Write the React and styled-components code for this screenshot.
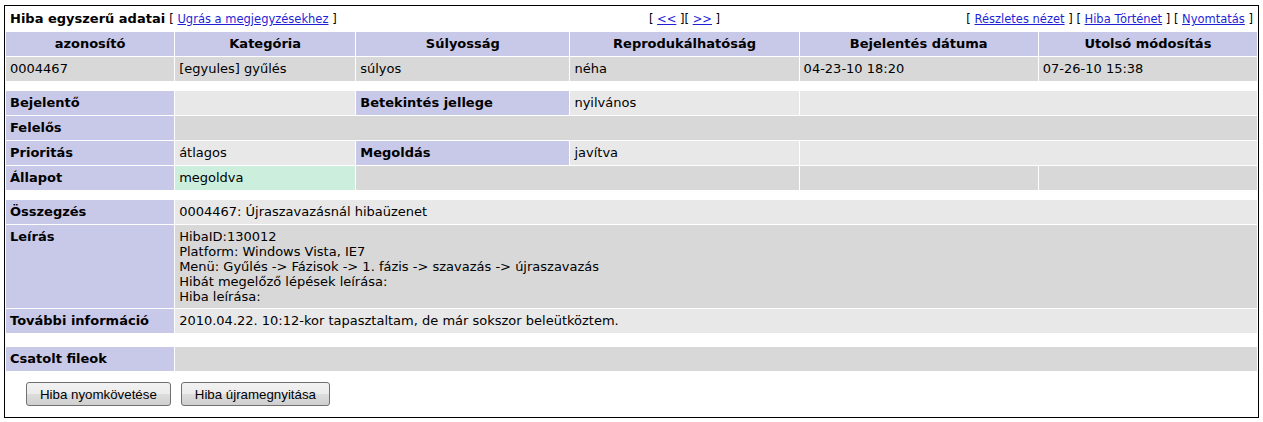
import React from 'react'
import styled, { createGlobalStyle } from 'styled-components'

const GlobalStyle = createGlobalStyle`
body{
  margin: 5px 4px 4px;
  background: #fff;
  color: #000;
  font-family: "DejaVu Sans", Verdana, sans-serif;
  font-size: 13px;
}
`

const Table = styled.table`
width: 100%;
table-layout: fixed;
border: 1px solid #000;
border-spacing: 1px;
`

const tones = {
  white: '#ffffff',
  cat: '#c8c8e8',
  row1: '#d8d8d8',
  row2: '#e8e8e8',
  resolved: '#cceedd'
}

const Cell = styled.td`
background-color: ${props => tones[props.$tone || 'white']};
font-weight: ${props => props.$bold ? 'bold' : 'normal'};
text-align: ${props => props.$align || 'left'};
vertical-align: top;
padding: 4px;
height: 16px;
line-height: 16px;
white-space: nowrap;
overflow: hidden;
`

const Spacer = styled.td`
height: ${props => props.$h}px;
padding: 0;
background: #fff;
`

const Title = styled.span`
font-weight: bold;
`

const SmallLinks = styled.span`
font-size: 11.5px;
a{
  color: #1f1fd6;
  text-decoration: underline;
}
`

const Description = styled.div`
line-height: 15px;
white-space: pre;
`

const ButtonCell = styled.td`
padding: 10px 4px 10px 20px;
background: #fff;
`

const ButtonBar = styled.div`
display: flex;
gap: 10px;
`

const Button = styled.button`
box-sizing: border-box;
height: 24px;
padding: 0 13px;
border: 1px solid #707070;
border-radius: 3px;
background: linear-gradient(#f2f2f2 0%, #ebebeb 50%, #dddddd 51%, #cfcfcf 100%);
font-family: "Liberation Sans", Arial, sans-serif;
font-size: 13.3px;
color: #000;
cursor: pointer;
`

const widths = [168, 180, 213, 228, 238, 218]

const Label = ({ children }) => <Cell $tone='cat' $bold>{children}</Cell>

const Services = () => {
  return (
    <Table>
      <colgroup>
        {widths.map((w, i) => <col key={i} style={{ width: w }} />)}
      </colgroup>
      <tbody>
        <tr>
          <Cell colSpan={3}>
            <Title>Hiba egyszerű adatai</Title>{' '}
            <SmallLinks>[ <a href='#notes'>Ugrás a megjegyzésekhez</a> ]</SmallLinks>
          </Cell>
          <Cell $align='center'>
            <SmallLinks>[ <a href='#prev'>&lt;&lt;</a> ][ <a href='#next'>&gt;&gt;</a> ]</SmallLinks>
          </Cell>
          <Cell colSpan={2} $align='right'>
            <SmallLinks>
              [ <a href='#adv'>Részletes nézet</a> ] [ <a href='#hist'>Hiba Történet</a> ] [ <a href='#print'>Nyomtatás</a> ]
            </SmallLinks>
          </Cell>
        </tr>
        <tr>
          {['azonosító', 'Kategória', 'Súlyosság', 'Reprodukálhatóság', 'Bejelentés dátuma', 'Utolsó módosítás'].map(h => (
            <Cell key={h} $tone='cat' $bold $align='center'>{h}</Cell>
          ))}
        </tr>
        <tr>
          {['0004467', '[egyules] gyűlés', 'súlyos', 'néha', '04-23-10 18:20', '07-26-10 15:38'].map(v => (
            <Cell key={v} $tone='row1'>{v}</Cell>
          ))}
        </tr>
        <tr><Spacer colSpan={6} $h={8} /></tr>
        <tr>
          <Label>Bejelentő</Label>
          <Cell $tone='row2'></Cell>
          <Label>Betekintés jellege</Label>
          <Cell $tone='row2'>nyilvános</Cell>
          <Cell $tone='row2' colSpan={2}></Cell>
        </tr>
        <tr>
          <Label>Felelős</Label>
          <Cell $tone='row1' colSpan={5}></Cell>
        </tr>
        <tr>
          <Label>Prioritás</Label>
          <Cell $tone='row2'>átlagos</Cell>
          <Label>Megoldás</Label>
          <Cell $tone='row2'>javítva</Cell>
          <Cell $tone='row2' colSpan={2}></Cell>
        </tr>
        <tr>
          <Label>Állapot</Label>
          <Cell $tone='resolved'>megoldva</Cell>
          <Cell $tone='row1' colSpan={2}></Cell>
          <Cell $tone='row1'></Cell>
          <Cell $tone='row1'></Cell>
        </tr>
        <tr><Spacer colSpan={6} $h={8} /></tr>
        <tr>
          <Label>Összegzés</Label>
          <Cell $tone='row2' colSpan={5}>0004467: Újraszavazásnál hibaüzenet</Cell>
        </tr>
        <tr>
          <Label>Leírás</Label>
          <Cell $tone='row1' colSpan={5} style={{ height: 'auto' }}>
            <Description>{'HibaID:130012\nPlatform: Windows Vista, IE7\nMenü: Gyűlés -> Fázisok -> 1. fázis -> szavazás -> újraszavazás\nHibát megelőző lépések leírása:\nHiba leírása:'}</Description>
          </Cell>
        </tr>
        <tr>
          <Label>További információ</Label>
          <Cell $tone='row2' colSpan={5}>2010.04.22. 10:12-kor tapasztaltam, de már sokszor beleütköztem.</Cell>
        </tr>
        <tr><Spacer colSpan={6} $h={12} /></tr>
        <tr>
          <Label>Csatolt fileok</Label>
          <Cell $tone='row1' colSpan={5}></Cell>
        </tr>
        <tr>
          <ButtonCell colSpan={6}>
            <ButtonBar>
              <Button>Hiba nyomkövetése</Button>
              <Button>Hiba újramegnyitása</Button>
            </ButtonBar>
          </ButtonCell>
        </tr>
      </tbody>
    </Table>
  )
}

const App = () => (
  <>
    <GlobalStyle />
    <Services />
  </>
)

export default App
